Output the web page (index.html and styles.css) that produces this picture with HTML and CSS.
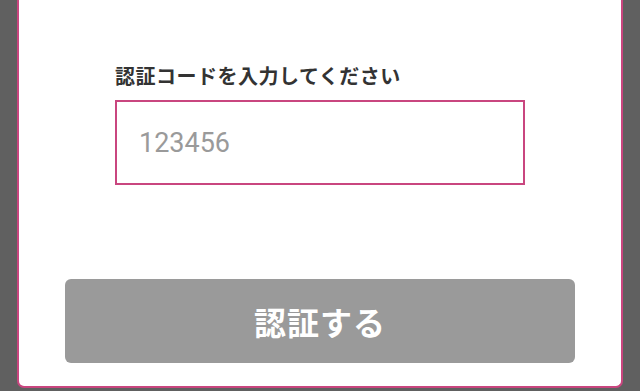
FILE: index.html
```html
<!DOCTYPE html>
<html lang="ja">
<head>
<meta charset="utf-8">
<title>認証コード</title>
<link rel="stylesheet" href="styles.css">
</head>
<body>
<div class="screen">
  <div class="card">
    <div class="field">
      <label class="field-label" for="code">認証コードを入力してください</label>
      <input class="field-input" id="code" type="text" placeholder="123456">
    </div>
    <button class="submit" type="button">認証する</button>
  </div>
</div>
</body>
</html>
```
FILE: styles.css
```css
* { box-sizing: border-box; }
html, body {
  margin: 0;
  padding: 0;
  background: #606060;
  width: 640px;
  height: 391px;
  overflow: hidden;
  font-family: "Noto Sans CJK JP", "Noto Sans", sans-serif;
}
.screen {
  padding: 0 17px 3px 17px;
  height: 391px;
}
.card {
  height: 388px;
  background: #ffffff;
  border: 2px solid #c9467f;
  border-top: none;
  border-radius: 0 0 7px 7px;
  padding: 62px 46px 23px 46px;
  display: flex;
  flex-direction: column;
}
.field {
  padding: 0 50px;
  display: flex;
  flex-direction: column;
  gap: 10px;
}
.field-label {
  font-size: 20px;
  line-height: 28px;
  font-weight: 700;
  color: #333333;
  letter-spacing: 0.5px;
}
.field-input {
  width: 410px;
  height: 85px;
  border: 2px solid #c9467f;
  border-radius: 0;
  padding: 0 22px;
  font-family: Roboto, "Noto Sans", sans-serif;
  font-size: 27px;
  color: #333;
  background: #fff;
  outline: none;
}
.field-input::placeholder {
  color: #9a9a9a;
}
.submit {
  margin-top: auto;
  height: 84px;
  width: 510px;
  border: none;
  border-radius: 6px;
  background: #9a9a9a;
  color: #ffffff;
  font-family: "Noto Sans CJK JP", sans-serif;
  font-size: 32px;
  font-weight: 700;
  letter-spacing: 1px;
  padding: 0;
}
```
